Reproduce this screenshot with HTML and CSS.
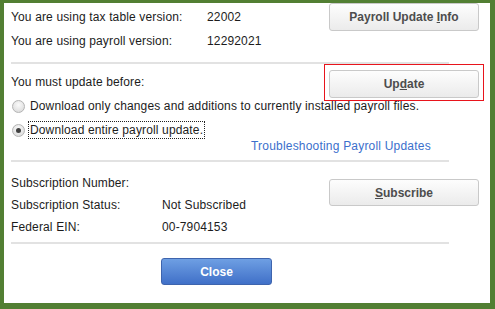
FILE: index.html
```html
<!DOCTYPE html>
<html>
<head>
<meta charset="utf-8">
<link rel="stylesheet" href="styles.css">
</head>
<body>
<div class="dialog">
  <div class="head">
    <div class="kv">
      <div class="row"><span class="lab">You are using tax table version:</span><span>22002</span></div>
      <div class="row"><span class="lab">You are using payroll version:</span><span>12292021</span></div>
    </div>
    <button class="btn">Payroll Update <u>I</u>nfo</button>
  </div>
  <div class="sep"></div>
  <div class="update-row">
    <span class="must">You must update before:</span>
    <div class="hl"><button class="btn">Up<u>d</u>ate</button></div>
  </div>
  <div class="radio-row first"><span class="radio"></span><span>Download only changes and additions to currently installed payroll files.</span></div>
  <div class="radio-row"><span class="radio on"></span><span class="focus">Download entire payroll update.</span></div>
  <div class="link">Troubleshooting Payroll Updates</div>
  <div class="sep sep2"></div>
  <div class="sub">
    <div class="kv2">
      <div class="row"><span class="lab2">Subscription Number:</span><span></span></div>
      <div class="row"><span class="lab2">Subscription Status:</span><span>Not Subscribed</span></div>
      <div class="row"><span class="lab2">Federal EIN:</span><span>00-7904153</span></div>
    </div>
    <button class="btn sbtn"><u>S</u>ubscribe</button>
  </div>
  <div class="sep sep3"></div>
  <button class="close">Close</button>
</div>
</body>
</html>
```
FILE: styles.css
```css
html, body {
  margin: 0;
  padding: 0;
  background: #527f33;
  width: 495px;
  height: 309px;
  overflow: hidden;
}
.dialog {
  margin: 3px 5px 0 4px;
  width: 486px;
  height: 300px;
  background: #fff;
  box-sizing: border-box;
  padding-left: 7px;
  font-family: "Liberation Sans", Arial, sans-serif;
  font-size: 12px;
  letter-spacing: 0.14px;
  color: #1c1c1c;
  position: relative;
}
.head {
  height: 59px;
  display: flex;
}
.kv {
  width: 318px;
  padding-top: 2px;
}
.row {
  display: flex;
  line-height: 24px;
}
.lab { width: 196px; }
.lab2 { width: 151px; }
.btn {
  width: 150px;
  height: 28px;
  border: 1px solid #c9c9c9;
  border-radius: 3px;
  background: linear-gradient(#fdfdfd, #ebebeb);
  font-family: "Liberation Sans", Arial, sans-serif;
  font-size: 12px;
  letter-spacing: 0;
  font-weight: bold;
  color: #4d4d4d;
  padding: 0;
  box-sizing: border-box;
}
.sep {
  width: 438px;
  height: 2px;
  background: #e2e2e2;
}
.update-row {
  display: flex;
  align-items: center;
  height: 34px;
}
.must {
  width: 318px;
  padding-top: 2px;
}
.hl {
  position: relative;
  padding-top: 6px;
}
.hl::before {
  content: "";
  position: absolute;
  left: -5px;
  top: 0;
  width: 158px;
  height: 35px;
  border: 1px solid #e8141c;
}
.radio-row {
  display: flex;
  align-items: center;
  height: 16px;
  margin-top: 8px;
}
.radio-row.first { margin-top: 0; }
.radio {
  border-radius: 50%;
  border: 1px solid #b4b4b4;
  background: radial-gradient(circle at 50% 35%, #fafafa, #d6d6d6);
  margin: 0 5px 0 1px;
  position: relative;
  box-sizing: border-box;
  width: 13px;
  height: 13px;
}
.radio.on::after {
  content: "";
  position: absolute;
  left: 3px;
  top: 3px;
  width: 5px;
  height: 5px;
  border-radius: 50%;
  background: #404040;
}
.focus {
  outline: 1px dotted #222;
  outline-offset: 1px;
}
.link {
  margin: 1px 0 0 240px;
  line-height: 14px;
  color: #3b6fcc;
  letter-spacing: 0.2px;
}
.sep2 { margin-top: 7px; }
.sub {
  display: flex;
  height: 76px;
}
.kv2 {
  width: 318px;
  padding-top: 10px;
}
.kv2 .row { line-height: 22px; }
.sbtn {
  margin-top: 17px;
  height: 27px;
}
.sep3 { margin-top: 4px; }
.close {
  margin: 14px 0 0 150px;
  width: 111px;
  height: 27px;
  border: 1px solid #3e64ad;
  border-radius: 3px;
  background: linear-gradient(#6e9fe3, #4070c8);
  color: #fff;
  font-family: "Liberation Sans", Arial, sans-serif;
  font-size: 12px;
  letter-spacing: 0;
  font-weight: bold;
  padding: 0;
  display: block;
}
```
